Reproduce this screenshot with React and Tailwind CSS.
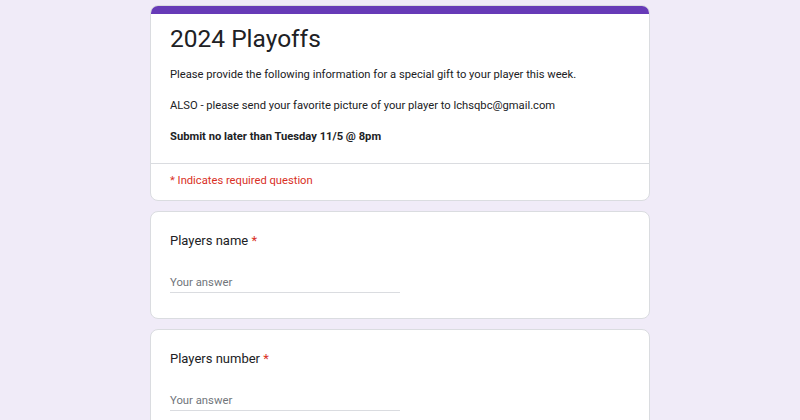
function Question({ label }) {
  return (
    <div className="rounded-lg border border-[#dadce0] bg-white px-[19px] pt-[19px] pb-[25px]">
      <div className="text-[13px] leading-[20px] text-[#202124]">
        {label} <span className="text-[#d93025]">*</span>
      </div>
      <div className="mt-[23px] w-[230px] border-b border-[#dadce0] text-[11.3px] leading-[18px] text-[#70757a]">
        Your answer
      </div>
    </div>
  );
}

export default function App() {
  return (
    <div
      className="min-h-[420px] bg-[#f0ebf8] pt-[5px]"
      style={{ fontFamily: "Roboto, 'Liberation Sans', sans-serif" }}
    >
      <div className="mx-auto flex w-[500px] flex-col gap-[10px]">
        <div className="overflow-hidden rounded-lg border border-[#dadce0] bg-white">
          <div className="h-[8px] bg-[#673ab7]" />
          <div className="px-[19px] pt-[7px] pb-[18px]">
            <h1 className="text-[24.5px] leading-[36px] text-[#202124]">2024 Playoffs</h1>
            <div className="mt-[10px] text-[11.2px] leading-[16px] text-[#202124]">
              <p>Please provide the following information for a special gift to your player this week.</p>
              <p className="mt-[15px]">ALSO - please send your favorite picture of your player to lchsqbc@gmail.com</p>
              <p className="mt-[15px] font-bold">Submit no later than Tuesday 11/5 @ 8pm</p>
            </div>
          </div>
          <div className="border-t border-[#dadce0] px-[19px] pt-[9px] pb-[11px] text-[11.2px] leading-[16px] text-[#d93025]">
            * Indicates required question
          </div>
        </div>
        <Question label="Players name" />
        <Question label="Players number" />
      </div>
    </div>
  );
}
